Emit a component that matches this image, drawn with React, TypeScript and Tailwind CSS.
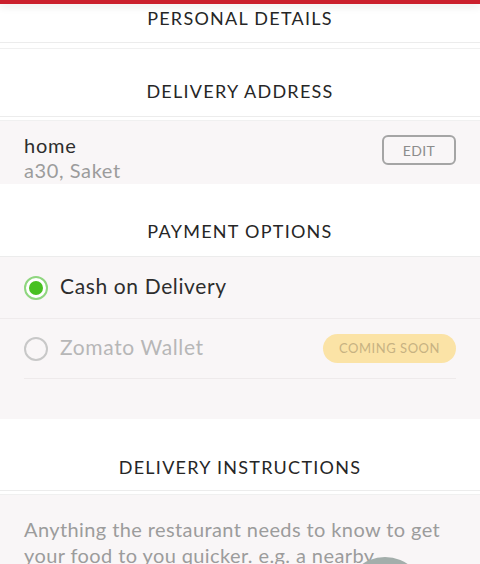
export default function App() {
  const font = { fontFamily: 'Lato, "Noto Sans", sans-serif' };
  const head = "text-[18px] leading-[28px] tracking-[0.07em] text-[#262626]";
  return (
    <div className="relative w-[480px] h-[564px] overflow-hidden bg-white" style={font}>
      <div className="h-[4px] bg-[#cb202d] shadow-[0_2px_8px_rgba(0,0,0,0.12)] relative z-10" />
      {/* Personal details */}
      <div className="h-[39px] flex items-start justify-center border-b border-[#ececec]">
        <span className={head}>PERSONAL DETAILS</span>
      </div>
      <div className="h-[5px]" />
      <div className="border-t border-[#f0f0f0] h-[68px] flex items-end justify-center pb-[11px]">
        <span className={head}>DELIVERY ADDRESS</span>
      </div>
      <div className="border-t border-[#ececec]" />
      <div className="h-[3px]" />
      <div className="bg-[#f9f6f7] border-t border-[#f0f0f0] h-[64px] px-[24px] flex items-start justify-between">
        <div className="pt-[12px]">
          <div className="text-[20px] leading-[25px] tracking-[0.04em] text-[#2d2d2d]">home</div>
          <div className="text-[20px] leading-[25px] tracking-[0.03em] text-[#9c9c9c]">a30, Saket</div>
        </div>
        <div className="mt-[14px] w-[74px] h-[30px] border-2 border-[#a5a5a5] rounded-[6px] flex items-center justify-center text-[14px] tracking-[0.03em] text-[#8c8c8c]">
          EDIT
        </div>
      </div>
      {/* Payment options */}
      <div className="h-[73px] flex items-end justify-center pb-[11px] border-b border-[#ececec]">
        <span className={head}>PAYMENT OPTIONS</span>
      </div>
      <div className="bg-[#f9f6f7]">
        <div className="h-[62px] px-[24px] flex items-center gap-[12px] border-b border-[#efebec]">
          <div className="w-[24px] h-[24px] rounded-full border-2 border-[#8fd67f] bg-white flex items-center justify-center">
            <div className="w-[14px] h-[14px] rounded-full bg-[#48c021]" />
          </div>
          <span className="text-[21px] leading-[28px] -mt-[3px] tracking-[0.03em] text-[#2d2d2d]">Cash on Delivery</span>
        </div>
        <div className="mx-[24px] h-[60px] flex items-center border-b border-[#eeeaeb]">
          <div className="w-[24px] h-[24px] rounded-full border-2 border-[#c8c8c8]" />
          <span className="ml-[12px] text-[21px] leading-[28px] -mt-[3px] tracking-[0.03em] text-[#b7b7b7]">Zomato Wallet</span>
          <div className="ml-auto w-[133px] h-[29px] rounded-full bg-[#fbe3a6] flex items-center justify-center text-[13px] tracking-[0.04em] text-[#c7b282]">
            COMING SOON
          </div>
        </div>
        <div className="h-[40px]" />
      </div>
      {/* Delivery instructions */}
      <div className="h-[72px] flex items-end justify-center pb-[9px] border-b border-[#ececec]">
        <span className={head}>DELIVERY INSTRUCTIONS</span>
      </div>
      <div className="h-[3px]" />
      <div className="bg-[#f9f6f7] border-t border-[#f0f0f0] h-[100px] px-[24px] pt-[21px]">
        <p className="text-[20px] leading-[26px] tracking-[0.02em] text-[#9c9c9c]">
          Anything the restaurant needs to know to get your food to you quicker. e.g. a nearby landmark
        </p>
      </div>
      <div className="absolute left-[345px] top-[557px] w-[80px] h-[80px] rounded-full bg-[#a3aeab]" />
    </div>
  );
}
